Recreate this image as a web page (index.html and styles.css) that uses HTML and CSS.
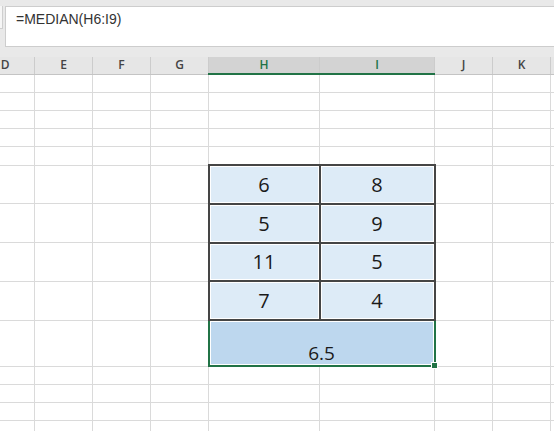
FILE: index.html
```html
<!DOCTYPE html>
<html lang="en">
<head>
    <meta charset="UTF-8">
    <meta name="viewport" content="width=device-width, initial-scale=1.0">
    <title>Median of a range</title>
    <link rel="stylesheet" href="styles.css">
</head>
<body>
    <!-- Formula bar -->
    <div class="top">
        <div class="fx-stub"></div>
        <div class="formula-bar">=MEDIAN(H6:I9)</div>
    </div>

    <!-- Worksheet -->
    <table class="sheet">
        <colgroup>
            <col class="c-std">
            <col class="c-std">
            <col class="c-std">
            <col class="c-std">
            <col class="c-h">
            <col class="c-i">
            <col class="c-std">
            <col class="c-std">
            <col class="c-std">
        </colgroup>
        <thead>
            <tr>
                <th>D</th><th>E</th><th>F</th><th>G</th>
                <th class="sel">H</th><th class="sel">I</th>
                <th>J</th><th>K</th><th></th>
            </tr>
        </thead>
        <tbody>
            <tr class="row"><td></td><td></td><td></td><td></td><td></td><td></td><td></td><td></td><td></td></tr>
            <tr class="row"><td></td><td></td><td></td><td></td><td></td><td></td><td></td><td></td><td></td></tr>
            <tr class="row"><td></td><td></td><td></td><td></td><td></td><td></td><td></td><td></td><td></td></tr>
            <tr class="row"><td></td><td></td><td></td><td></td><td></td><td></td><td></td><td></td><td></td></tr>
            <tr class="row"><td></td><td></td><td></td><td></td><td></td><td></td><td></td><td></td><td></td></tr>

            <tr class="row-data"><td></td><td></td><td></td><td></td><td class="val">6</td><td class="val">8</td><td></td><td></td><td></td></tr>
            <tr class="row-data"><td></td><td></td><td></td><td></td><td class="val">5</td><td class="val">9</td><td></td><td></td><td></td></tr>
            <tr class="row-data"><td></td><td></td><td></td><td></td><td class="val">11</td><td class="val">5</td><td></td><td></td><td></td></tr>
            <tr class="row-data"><td></td><td></td><td></td><td></td><td class="val">7</td><td class="val">4</td><td></td><td></td><td></td></tr>

            <tr class="row-result">
                <td></td><td></td><td></td><td></td>
                <td class="result" colspan="2">6.5<span class="handle"></span></td>
                <td></td><td></td><td></td>
            </tr>

            <tr class="row"><td></td><td></td><td></td><td></td><td></td><td></td><td></td><td></td><td></td></tr>
            <tr class="row"><td></td><td></td><td></td><td></td><td></td><td></td><td></td><td></td><td></td></tr>
            <tr class="row"><td></td><td></td><td></td><td></td><td></td><td></td><td></td><td></td><td></td></tr>
            <tr class="row"><td></td><td></td><td></td><td></td><td></td><td></td><td></td><td></td><td></td></tr>
        </tbody>
    </table>
</body>
</html>
```

FILE: styles.css
```css
body {
    margin: 0;
    width: 554px;
    height: 431px;
    overflow: hidden;
    background-color: #ffffff;
    font-family: 'Open Sans', 'Noto Sans', sans-serif;
}

/* Formula bar area */
.top {
    display: flex;
    align-items: flex-start;
    gap: 2px;
    height: 57px;
    padding-top: 6px;
    box-sizing: border-box;
    background-color: #e9e9e9;
}

.fx-stub {
    width: 2px;
    height: 22px;
    background-color: #f6f6f6;
    border-right: 1px solid #cfcfcf;
    border-bottom: 1px solid #cfcfcf;
}

.formula-bar {
    flex: 1;
    height: 41px;
    box-sizing: border-box;
    padding: 4px 0 0 10px;
    background-color: #ffffff;
    border: 1px solid #cdcdcd;
    border-right: none;
    font-family: 'Liberation Sans', Arial, sans-serif;
    font-size: 14px;
    line-height: 16px;
    color: #333333;
}

/* Worksheet grid */
.sheet {
    margin-left: -24px;
    border-collapse: collapse;
    table-layout: fixed;
    width: 632px;
}

.c-std { width: 58px; }
.c-h { width: 111px; }
.c-i { width: 115px; }

.sheet th {
    height: 16px;
    padding: 0;
    background-color: #e6e6e6;
    border-right: 1px solid #cccccc;
    border-bottom: 1px solid #c4c4c4;
    font-size: 12px;
    font-weight: 600;
    line-height: 16px;
    color: #444444;
}

.sheet th.sel {
    background-color: #d3d3d3;
    border-bottom: 2px solid #217346;
    color: #217346;
}

.sheet td {
    padding: 0;
    border: 1px solid #dadada;
}

.row td { height: 17px; }
.row-data td { height: 35.75px; }
.row-result td { height: 42px; }

/* Data block */
.sheet td.val {
    border: 2px solid #454545;
    background-color: #ddebf7;
    box-shadow: inset 0 0 0 1px #ffffff;
    text-align: center;
    vertical-align: middle;
    padding-top: 1px;
    font-size: 20px;
    line-height: 20px;
    color: #1a1a1a;
}

/* Selected merged result cell */
.sheet td.result {
    position: relative;
    border: 2px solid #217346;
    background-color: #bdd7ee;
    box-shadow: inset 0 0 0 1px #ffffff;
    text-align: center;
    vertical-align: bottom;
    padding-bottom: 2px;
    font-size: 19px;
    line-height: 20px;
    color: #1a1a1a;
}

.handle {
    position: absolute;
    right: -4px;
    bottom: -4px;
    width: 5px;
    height: 5px;
    background-color: #217346;
    border: 1px solid #ffffff;
}
```
